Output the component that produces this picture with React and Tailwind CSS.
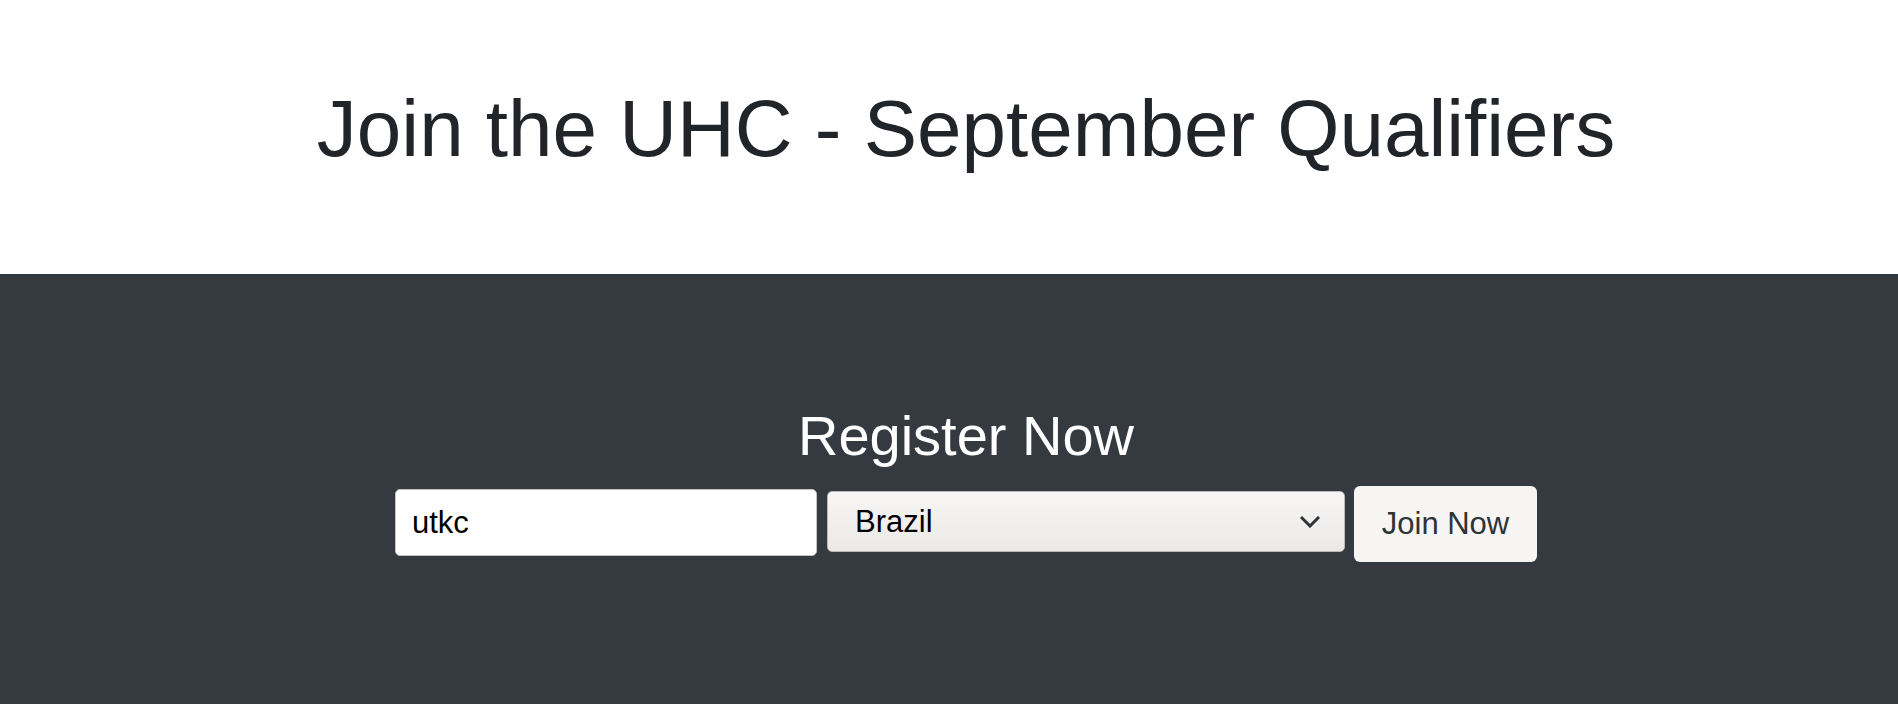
export default function App() {
  return (
    <div className="min-h-[704px] bg-[#343a40] font-['Liberation_Sans',Arial,sans-serif]">
      <header className="h-[274px] bg-white pl-[34px] pt-[81px]">
        <h1 className="text-center text-[80px] leading-[1.2] font-normal text-[#212529]">
          Join the UHC - September Qualifiers
        </h1>
      </header>

      <section className="flex flex-col items-center pl-[34px] pt-[128px]">
        <h2 className="text-[56px] leading-[1.2] font-normal text-white">Register Now</h2>

        <div className="mt-[17px] flex items-start">
          <input
            type="text"
            defaultValue="utkc"
            className="mt-[3px] h-[67px] w-[422px] rounded-[5px] border border-[#c6c3bf] bg-white px-[16px] text-[31px] text-black outline-none"
          />

          <div className="ml-[10px] mt-[5px] flex h-[61px] w-[518px] items-center justify-between rounded-[5px] border border-[#bcb8b4] bg-gradient-to-b from-[#f7f6f5] to-[#ebe9e7] pl-[27px] pr-[24px] text-[31px] text-black">
            <span className="pt-[2px]">Brazil</span>
            <svg width="20" height="12" viewBox="0 0 20 12" fill="none">
              <path d="M2 2l8 8 8-8" stroke="#2e3436" strokeWidth="3" strokeLinecap="square" />
            </svg>
          </div>

          <button className="ml-[9px] h-[76px] w-[183px] rounded-[6px] bg-[#f6f5f4] text-[31px] text-[#2e3436]">
            Join Now
          </button>
        </div>
      </section>
    </div>
  );
}
